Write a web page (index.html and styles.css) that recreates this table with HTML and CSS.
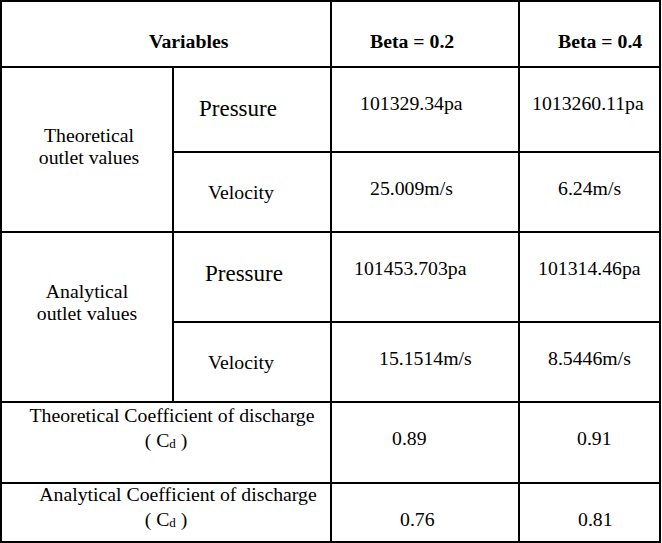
FILE: index.html
```html
<!DOCTYPE html>
<html lang="en">
<head>
<meta charset="utf-8">
<title>Outlet values</title>
<link rel="stylesheet" href="styles.css">
</head>
<body>
<table class="grid">
  <colgroup>
    <col class="c1"><col class="c2"><col class="c3"><col class="c4">
  </colgroup>
  <tr class="r0">
    <td colspan="2" class="head x147">Variables</td>
    <td class="head x38">Beta = 0.2</td>
    <td class="head x38">Beta = 0.4</td>
  </tr>
  <tr class="r1">
    <td rowspan="2" class="group theo"><div>Theoretical</div><div>outlet values</div></td>
    <td class="press x25">Pressure</td>
    <td class="num x28">101329.34pa</td>
    <td class="num x12">1013260.11pa</td>
  </tr>
  <tr class="r2">
    <td class="label x34">Velocity</td>
    <td class="num x38">25.009m/s</td>
    <td class="num x38">6.24m/s</td>
  </tr>
  <tr class="r3">
    <td rowspan="2" class="group ana"><div>Analytical</div><div>outlet values</div></td>
    <td class="press x31">Pressure</td>
    <td class="num x22">101453.703pa</td>
    <td class="num x18">101314.46pa</td>
  </tr>
  <tr class="r4">
    <td class="label x34">Velocity</td>
    <td class="num x47">15.1514m/s</td>
    <td class="num x28">8.5446m/s</td>
  </tr>
  <tr class="r5">
    <td colspan="2" class="coef coef-theo"><div class="l1">Theoretical Coefficient of discharge</div><div class="l2">( C<span class="sub">d</span> )</div></td>
    <td class="num x60">0.89</td>
    <td class="num x57">0.91</td>
  </tr>
  <tr class="r6">
    <td colspan="2" class="coef coef-ana"><div class="l1">Analytical Coefficient of discharge</div><div class="l2">( C<span class="sub">d</span> )</div></td>
    <td class="num x68">0.76</td>
    <td class="num x58">0.81</td>
  </tr>
</table>
</body>
</html>
```

FILE: styles.css
```css
* { box-sizing: border-box; }

html, body {
  margin: 0;
  padding: 0;
  background: #fff;
}

body {
  font-family: "Liberation Serif", "Times New Roman", serif;
  font-size: 19.75px;
  line-height: 22px;
  color: #000;
}

.grid {
  border-collapse: separate;
  border-spacing: 0;
  table-layout: fixed;
  width: 661px;
  border-top: 2px solid #000;
  border-left: 2px solid #000;
  font-family: "Liberation Serif", "Times New Roman", serif;
}

.grid td {
  border-right: 2px solid #000;
  border-bottom: 2px solid #000;
  padding: 0;
  vertical-align: top;
  text-align: left;
  white-space: nowrap;
}

col.c1 { width: 172px; }
col.c2 { width: 158px; }
col.c3 { width: 188px; }
col.c4 { width: 141px; }

tr.r0 { height: 66px; }
tr.r1 { height: 85px; }
tr.r2 { height: 80px; }
tr.r3 { height: 90px; }
tr.r4 { height: 80px; }
tr.r5 { height: 81px; }
tr.r6 { height: 59px; }

.grid td.head {
  font-weight: bold;
  padding-top: 28px;
}

.grid td.num { padding-top: 24px; }
.grid td.label { padding-top: 28px; }

.grid td.press {
  font-size: 23px;
  line-height: 26px;
  padding-top: 28px;
}

.grid td.group { text-align: center; }
.grid td.theo { padding-top: 56px; padding-left: 4px; }
.grid td.ana { padding-top: 47px; }

.grid td.coef {
  text-align: center;
  line-height: 20px;
}
.grid td.coef-theo { padding-top: 2px; }
.grid td.coef-ana { padding-top: 0; }
.coef-theo .l1 { padding-left: 12px; }
.coef-ana .l1 { padding-left: 24px; }
.coef .l2 { margin-top: 5px; }

.sub {
  font-size: 13px;
  line-height: 1;
  vertical-align: -1px;
}

.grid td.x12 { padding-left: 12px; }
.grid td.x18 { padding-left: 18px; }
.grid td.x22 { padding-left: 22px; }
.grid td.x25 { padding-left: 25px; }
.grid td.x28 { padding-left: 28px; }
.grid td.x31 { padding-left: 31px; }
.grid td.x34 { padding-left: 34px; }
.grid td.x38 { padding-left: 38px; }
.grid td.x47 { padding-left: 47px; }
.grid td.x57 { padding-left: 57px; }
.grid td.x58 { padding-left: 58px; }
.grid td.x60 { padding-left: 60px; }
.grid td.x68 { padding-left: 68px; }
.grid td.x147 { padding-left: 147px; }
```
